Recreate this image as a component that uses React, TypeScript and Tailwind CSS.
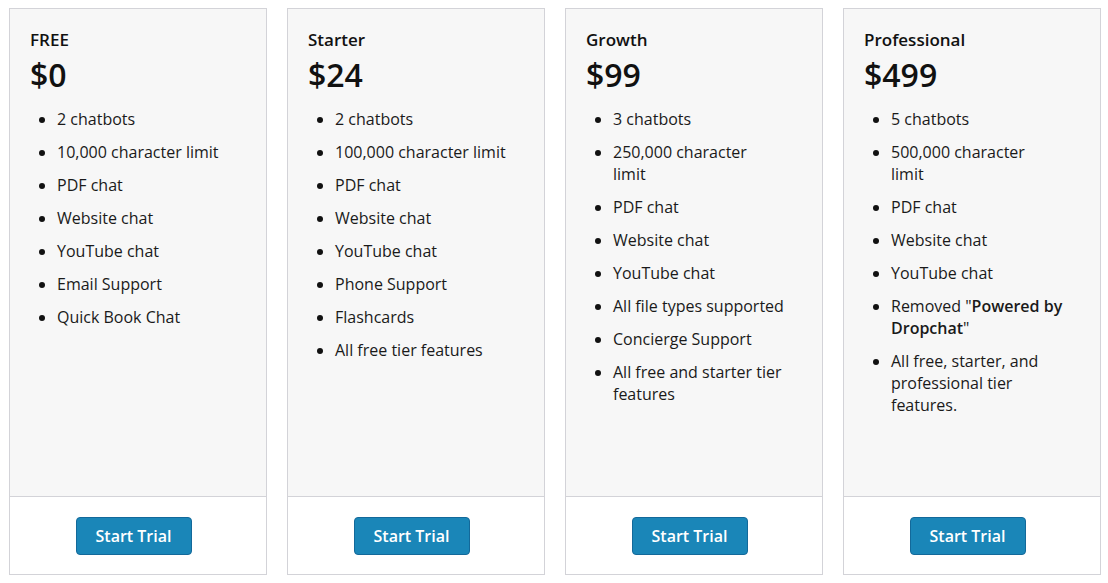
import React from 'react';

type Plan = {
  name: string;
  price: string;
  features: React.ReactNode[];
};

const plans: Plan[] = [
  {
    name: 'FREE',
    price: '$0',
    features: ['2 chatbots', '10,000 character limit', 'PDF chat', 'Website chat', 'YouTube chat', 'Email Support', 'Quick Book Chat'],
  },
  {
    name: 'Starter',
    price: '$24',
    features: ['2 chatbots', '100,000 character limit', 'PDF chat', 'Website chat', 'YouTube chat', 'Phone Support', 'Flashcards', 'All free tier features'],
  },
  {
    name: 'Growth',
    price: '$99',
    features: [
      '3 chatbots',
      <>250,000 character<br />limit</>,
      'PDF chat',
      'Website chat',
      'YouTube chat',
      'All file types supported',
      'Concierge Support',
      <>All free and starter tier<br />features</>,
    ],
  },
  {
    name: 'Professional',
    price: '$499',
    features: [
      '5 chatbots',
      <>500,000 character<br />limit</>,
      'PDF chat',
      'Website chat',
      'YouTube chat',
      <>Removed "<strong className="font-semibold">Powered by<br />Dropchat</strong>"</>,
      <>All free, starter, and<br />professional tier<br />features.</>,
    ],
  },
];

const PlanCard = ({ name, price, features }: Plan) => (
  <div className="flex flex-col border border-[#d3d3d8] bg-white">
    <div className="flex-1 bg-[#f7f7f7] px-[20px] pt-[20px]">
      <h3 className="text-[17px] leading-[22px] font-semibold text-[#111]">{name}</h3>
      <p className="text-[32px] leading-[40px] font-semibold text-[#111] mt-[4px]">{price}</p>
      <ul className="list-disc pl-[27px] pr-[10px] mt-[13px] space-y-[11px] text-[16px] leading-[22px] text-[#1a1a1a] marker:text-[#111]">
        {features.map((f, i) => (
          <li key={i} className="whitespace-nowrap">{f}</li>
        ))}
      </ul>
    </div>
    <div className="h-[78px] border-t border-[#d3d3d8] flex items-center justify-center pr-[9px]">
      <button className="w-[116px] h-[38px] rounded-[4px] bg-[#1a86b8] border border-[#13699a] text-white text-[16px] font-semibold">
        Start Trial
      </button>
    </div>
  </div>
);

export default function App() {
  return (
    <div
      className="w-[1108px] h-[583px] bg-white pl-[9px] pr-[7px] pt-[8px] pb-[8px] grid grid-cols-4 gap-[20px]"
      style={{ fontFamily: '"Open Sans", "Noto Sans", sans-serif' }}
    >
      {plans.map((p) => (
        <PlanCard key={p.name} {...p} />
      ))}
    </div>
  );
}
